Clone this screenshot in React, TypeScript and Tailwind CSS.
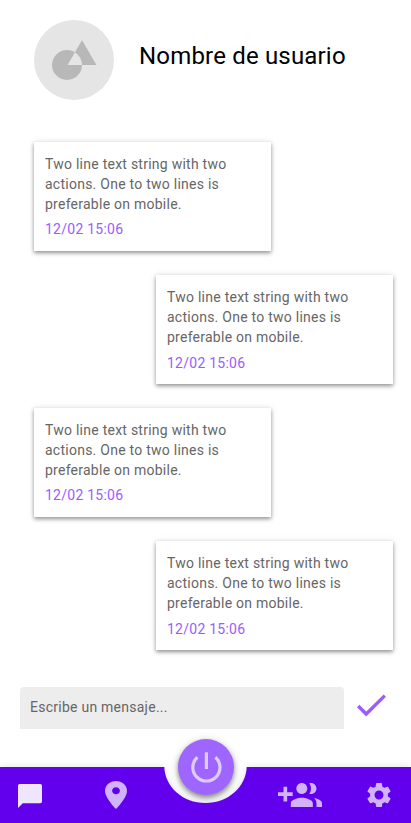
import React from "react";

type Side = "left" | "right";

const messages: { id: number; side: Side; time: string }[] = [
  { id: 1, side: "left", time: "12/02 15:06" },
  { id: 2, side: "right", time: "12/02 15:06" },
  { id: 3, side: "left", time: "12/02 15:06" },
  { id: 4, side: "right", time: "12/02 15:06" },
];

function Header() {
  return (
    <header className="flex h-[142px] items-start pt-5 pl-[34px]">
      <svg className="h-20 w-20 shrink-0" viewBox="0 0 80 80">
        <circle cx="40" cy="40" r="40" fill="#e5e5e5" />
        <path
          fill="#b8b8b8"
          fillRule="evenodd"
          d="M18 45a15 15 0 1 0 30 0a15 15 0 1 0-30 0zM48 20.2L62.5 45h-29z"
        />
      </svg>
      <h1 className="mt-[20px] ml-[25px] text-[24px] leading-8 font-normal tracking-[0.18px] whitespace-nowrap text-black">
        Nombre de usuario
      </h1>
    </header>
  );
}

function Message({ side, time }: { side: Side; time: string }) {
  return (
    <article
      className={
        "h-[109px] w-[237px] bg-white px-[11px] pt-3 text-sm leading-5 whitespace-nowrap shadow-[0_2px_4px_rgba(0,0,0,0.4),0_0_8px_rgba(0,0,0,0.08)] " +
        (side === "left" ? "self-start" : "self-end")
      }
    >
      <p className="tracking-[0.25px] text-[#666666]">
        Two line text string with two
        <br />
        actions. One to two lines is
        <br />
        preferable on mobile.
      </p>
      <time
        className={
          "block tracking-[0.25px] text-[#9a5cff] " +
          (side === "left" ? "mt-[5px]" : "mt-1.5")
        }
      >
        {time}
      </time>
    </article>
  );
}

function Composer() {
  return (
    <div className="mt-[37px] flex h-[42px] pl-5">
      <div className="flex w-[324px] items-center rounded-t bg-[#ededed] pb-0.5 pl-2.5 text-sm tracking-[0.25px] text-[#666666]">
        Escribe un mensaje...
      </div>
      <svg className="mt-[7px] ml-[13px] h-[23px] w-[29px]" viewBox="0 0 29 23">
        <path d="M1.2 12L9.2 20L27.8 1.6" fill="none" stroke="#9a5cff" strokeWidth="3.4" />
      </svg>
    </div>
  );
}

function BottomBar() {
  return (
    <nav className="relative mt-[38px] h-14 w-full">
      <svg
        className="absolute inset-0 h-14 w-full overflow-visible drop-shadow-[0_0_4px_rgba(0,0,0,0.12)]"
        viewBox="0 0 411 56"
      >
        <path
          d="M0 0H164.3C165 20 183 36 205.5 36S246 20 246.7 0H411V56H0z"
          fill="#6200ee"
        />
      </svg>
      <div className="relative flex h-14 items-start">
        <svg className="mt-[17px] ml-[18px] h-6 w-6" viewBox="0 0 24 24" fill="#efe5fd">
          <path d="M1.8 0H22.2Q24 0 24 1.8V17.4Q24 19.2 22.2 19.2H4.8L0 24V1.8Q0 0 1.8 0z" />
        </svg>
        <svg
          className="mt-[14px] ml-[63px] h-7 w-[22px]"
          viewBox="5 2 14 20"
          preserveAspectRatio="none"
          fill="#d0b3fa"
        >
          <path d="M12 2C8.13 2 5 5.13 5 9c0 5.25 7 13 7 13s7-7.75 7-13c0-3.87-3.13-7-7-7zm0 9.5c-1.38 0-2.5-1.12-2.5-2.5s1.12-2.5 2.5-2.5 2.5 1.12 2.5 2.5-1.12 2.5-2.5 2.5z" />
        </svg>
        <svg
          className="mt-4 ml-[151px] h-6 w-11"
          viewBox="0 5 24 13"
          preserveAspectRatio="none"
          fill="#d0b3fa"
        >
          <path d="M8 10H5V7H3v3H0v2h3v3h2v-3h3v-2zm10 1c1.66 0 2.99-1.34 2.99-3S19.66 5 18 5c-.32 0-.63.05-.91.14.57.81.9 1.79.9 2.86s-.34 2.04-.9 2.86c.28.09.59.14.91.14zm-5 0c1.66 0 2.99-1.34 2.99-3S14.66 5 13 5s-3 1.34-3 3 1.34 3 3 3zm6.62 2.16c.83.73 1.38 1.66 1.38 2.84v2h3v-2c0-1.54-2.37-2.49-4.38-2.84zM13 13c-2 0-6 1-6 3v2h12v-2c0-2-4-3-6-3z" />
        </svg>
        <svg
          className="mt-4 ml-[45px] h-6 w-6"
          viewBox="2.3 2.4 19.4 19.2"
          preserveAspectRatio="none"
          fill="#d0b3fa"
        >
          <path d="M19.14 12.94c.04-.3.06-.61.06-.94 0-.32-.02-.64-.07-.94l2.03-1.58c.18-.14.23-.41.12-.61l-1.92-3.32c-.12-.22-.37-.29-.59-.22l-2.39.96c-.5-.38-1.03-.7-1.62-.94l-.36-2.54c-.04-.24-.24-.41-.48-.41h-3.84c-.24 0-.43.17-.47.41l-.36 2.54c-.59.24-1.13.57-1.62.94l-2.39-.96c-.22-.08-.47 0-.59.22L2.74 8.87c-.12.21-.08.47.12.61l2.03 1.58c-.05.3-.09.63-.09.94s.02.64.07.94l-2.03 1.58c-.18.14-.23.41-.12.61l1.92 3.32c.12.22.37.29.59.22l2.39-.96c.5.38 1.03.7 1.62.94l.36 2.54c.05.24.24.41.48.41h3.84c.24 0 .44-.17.47-.41l.36-2.54c.59-.24 1.13-.56 1.62-.94l2.39.96c.22.08.47 0 .59-.22l1.92-3.32c.12-.22.07-.47-.12-.61l-2.01-1.58zM12 15.6c-1.98 0-3.6-1.62-3.6-3.6s1.62-3.6 3.6-3.6 3.6 1.62 3.6 3.6-1.62 3.6-3.6 3.6z" />
        </svg>
      </div>
      <button
        aria-label="Encender"
        className="absolute -top-7 left-[177.5px] h-14 w-14 rounded-full bg-[#9e66ff] shadow-[0_3px_5px_rgba(0,0,0,0.4),0_1px_10px_rgba(0,0,0,0.14)]"
      >
        <svg className="h-14 w-14" viewBox="0 0 56 56" fill="none" stroke="#dfccff" strokeWidth="3.2">
          <path d="M28.4 13.3V30" />
          <path d="M19.4 18.2A13.6 13.6 0 1 0 37.4 18.2" />
        </svg>
      </button>
    </nav>
  );
}

export default function App() {
  return (
    <div className="flex h-[823px] w-[411px] flex-col overflow-hidden bg-white font-[Roboto,sans-serif]">
      <Header />
      <main className="flex flex-col gap-6 pr-[18px] pl-[34px]">
        {messages.map((m) => (
          <Message key={m.id} side={m.side} time={m.time} />
        ))}
      </main>
      <Composer />
      <BottomBar />
    </div>
  );
}
